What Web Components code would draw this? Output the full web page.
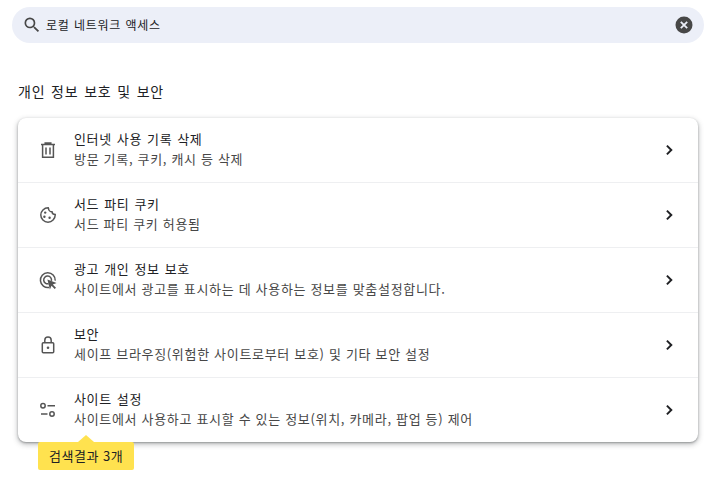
<!DOCTYPE html>
<html lang="ko">
<head>
<meta charset="utf-8">
<title>개인 정보 보호 및 보안</title>
<style>
  html, body { margin: 0; background: #fff; }
  body { font-family: "Noto Sans CJK KR", "Noto Sans", sans-serif; color: #202124; }
</style>
</head>
<body>
<settings-page>
  <settings-search slot="search" value="로컬 네트워크 액세스"></settings-search>
  <settings-section heading="개인 정보 보호 및 보안">
    <settings-row icon="trash" label="인터넷 사용 기록 삭제" sub="방문 기록, 쿠키, 캐시 등 삭제"></settings-row>
    <settings-row icon="cookie" label="서드 파티 쿠키" sub="서드 파티 쿠키 허용됨"></settings-row>
    <settings-row icon="ads" label="광고 개인 정보 보호" sub="사이트에서 광고를 표시하는 데 사용하는 정보를 맞춤설정합니다."></settings-row>
    <settings-row icon="lock" label="보안" sub="세이프 브라우징(위험한 사이트로부터 보호) 및 기타 보안 설정"></settings-row>
    <settings-row icon="tune" label="사이트 설정" sub="사이트에서 사용하고 표시할 수 있는 정보(위치, 카메라, 팝업 등) 제어"></settings-row>
    <result-bubble slot="bubble">검색결과 3개</result-bubble>
  </settings-section>
</settings-page>

<script>
// Row icons, drawn on a 20 box with thin strokes
const ICONS = {
  trash: '<path d="M3 4.6h14M7.2 4.6V2.9h5.6v1.7M4.6 4.6v12.7h10.8V4.6M8 7.5v7M12 7.5v7"/>',
  cookie: '<path d="M10.2 2.8C6 2.8 2.8 6.1 2.8 10a7.2 7.2 0 0 0 14.4 0v-.6c-1.7 0-3-1-3.2-2.6-1.9 0-3.5-1.5-3.5-3.3z"/><g fill="#555" stroke="none"><circle cx="7.2" cy="7.6" r="1.2"/><circle cx="6.4" cy="11.8" r="1.2"/><circle cx="11.6" cy="12.8" r="1.2"/></g>',
  ads: '<path d="M11.2 17.4A7.4 7.4 0 1 1 17.2 10.6"/><path d="M10.6 13.7A3.9 3.9 0 1 1 13.4 10.8"/><path d="M9.4 9.6l9.2 3.4-3.8 1.5 3.2 3.2-1.3 1.3-3.2-3.2-1.6 3.8z" fill="#555" stroke="none"/>',
  lock: '<rect x="4.3" y="7.7" width="11.4" height="10" rx="1"/><path d="M6.8 7.7V5.2a3.2 3.2 0 0 1 6.4 0v2.5"/><circle cx="10" cy="12.7" r="1.3" fill="#555" stroke="none"/>',
  tune: '<circle cx="5" cy="5.7" r="2.2"/><path d="M9.5 5.7h7.5M3 14h6.5"/><circle cx="14" cy="14" r="2.2"/>'
};

class SettingsPage extends HTMLElement {
  constructor() {
    super();
    this.attachShadow({ mode: 'open' });
    this.shadowRoot.innerHTML = `
      <style>
        :host { display: flex; flex-direction: column; width: 716px; height: 488px; box-sizing: border-box; padding-top: 7px; overflow: hidden; }
      </style>
      <slot name="search"></slot>
      <slot></slot>
    `;
  }
}

class SettingsSearch extends HTMLElement {
  constructor() {
    super();
    this.attachShadow({ mode: 'open' });
    this.shadowRoot.innerHTML = `
      <style>
        :host { display: flex; align-items: center; height: 36px; margin: 0 12px; padding: 0 10px; border-radius: 18px; background: #eceff8; flex: none; }
        svg { display: block; flex: none; }
        .text { flex: 1; margin-left: 4px; font-size: 12px; line-height: 36px; letter-spacing: .65px; word-spacing: .7px; color: #202124; }
      </style>
      <svg width="20" height="20" viewBox="0 0 24 24" fill="#474747"><path d="M15.5 14h-.79l-.28-.27A6.47 6.47 0 0 0 16 9.5 6.5 6.5 0 1 0 9.5 16c1.61 0 3.09-.59 4.23-1.57l.27.28v.79l5 4.99L20.49 19l-4.99-5zm-6 0C7.01 14 5 11.99 5 9.5S7.01 5 9.5 5 14 7.01 14 9.5 11.99 14 9.5 14z"/></svg>
      <span class="text"></span>
      <svg width="20" height="20" viewBox="0 0 20 20"><circle cx="10" cy="10" r="8.5" fill="#474747"/><path d="M6.8 6.8l6.4 6.4M13.2 6.8l-6.4 6.4" stroke="#eceff8" stroke-width="1.8"/></svg>
    `;
    this.shadowRoot.querySelector('.text').textContent = this.getAttribute('value');
  }
}

class SettingsSection extends HTMLElement {
  constructor() {
    super();
    this.attachShadow({ mode: 'open' });
    this.shadowRoot.innerHTML = `
      <style>
        :host { display: block; margin: 0 18px; }
        h2 { margin: 37px 0 16px; font-size: 14px; font-weight: 400; line-height: 22px; letter-spacing: .8px; word-spacing: 1px; color: #202124; }
        .wrap { position: relative; }
        .card { border-radius: 8px; background: #fff; box-shadow: 0 1px 2px rgba(60,64,67,.4), 0 2px 5px 1px rgba(60,64,67,.28); }
      </style>
      <h2></h2>
      <div class="wrap">
        <div class="card"><slot></slot></div>
        <slot name="bubble"></slot>
      </div>
    `;
    this.shadowRoot.querySelector('h2').textContent = this.getAttribute('heading');
  }
}

class SettingsRow extends HTMLElement {
  constructor() {
    super();
    this.attachShadow({ mode: 'open' });
    this.shadowRoot.innerHTML = `
      <style>
        :host { display: flex; align-items: center; height: 65px; box-sizing: border-box; padding: 0 18px 2px 20px; border-top: 1px solid #eeeff1; }
        :host(:first-child) { height: 64px; border-top: 0; }
        .icon { display: block; flex: none; width: 20px; height: 20px; margin: 2px 16px 0 0; fill: none; stroke: #555; stroke-width: 1.5; }
        .body { flex: 1; min-width: 0; }
        .label { font-size: 13px; line-height: 20px; letter-spacing: .65px; word-spacing: .7px; color: #202124; }
        .sub { font-size: 13px; line-height: 20px; letter-spacing: .68px; color: #474747; }
        .chev { display: block; flex: none; width: 20px; height: 20px; margin-top: 2px; fill: #202124; }
      </style>
      <svg class="icon" viewBox="0 0 20 20">${ICONS[this.getAttribute('icon')]}</svg>
      <div class="body">
        <div class="label"></div>
        <div class="sub"></div>
      </div>
      <svg class="chev" viewBox="0 0 20 20"><path d="M7.6 4.9L6.2 6.3 9.9 10l-3.7 3.7 1.4 1.4L12.7 10z"/></svg>
    `;
    this.shadowRoot.querySelector('.label').textContent = this.getAttribute('label');
    this.shadowRoot.querySelector('.sub').textContent = this.getAttribute('sub');
  }
}

class ResultBubble extends HTMLElement {
  constructor() {
    super();
    this.attachShadow({ mode: 'open' });
    this.shadowRoot.innerHTML = `
      <style>
        /* sits over the card's bottom edge */
        :host { position: absolute; left: 20px; top: 100%; display: block; width: 96px; box-sizing: border-box; height: 28px; padding: 0 11px; border-radius: 2px; background: #ffe24f; font-size: 13px; line-height: 28px; letter-spacing: .5px; color: #202124; white-space: nowrap; }
        .tip { position: absolute; left: 40px; top: -7px; width: 0; height: 0; border-left: 8px solid transparent; border-right: 8px solid transparent; border-bottom: 7px solid #ffe24f; }
      </style>
      <div class="tip"></div>
      <slot></slot>
    `;
  }
}

customElements.define('settings-page', SettingsPage);
customElements.define('settings-search', SettingsSearch);
customElements.define('settings-section', SettingsSection);
customElements.define('settings-row', SettingsRow);
customElements.define('result-bubble', ResultBubble);
</script>
</body>
</html>
